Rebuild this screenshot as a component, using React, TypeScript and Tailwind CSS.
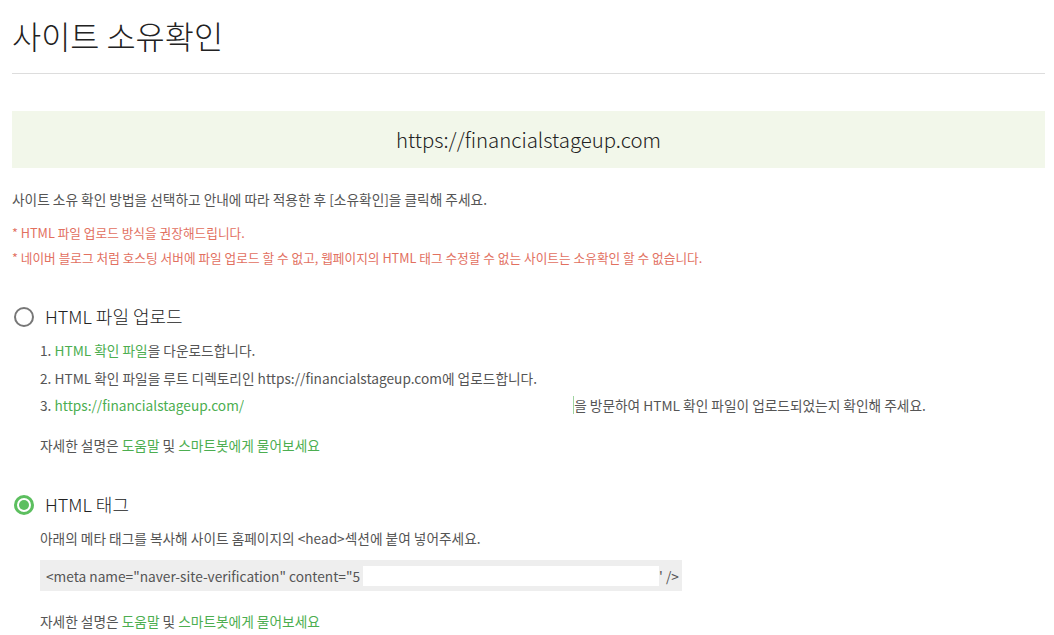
import React from 'react';

const font = { fontFamily: '"Noto Sans CJK KR", "Noto Sans", sans-serif' };

function Radio({ checked }: { checked?: boolean }) {
  if (checked) {
    return (
      <span className="flex h-[20px] w-[20px] items-center justify-center rounded-full border-[3px] border-[#5cbf5f]">
        <span className="h-[10px] w-[10px] rounded-full bg-[#5cbf5f]" />
      </span>
    );
  }
  return <span className="block h-[20px] w-[20px] rounded-full border-2 border-[#777]" />;
}

function Help() {
  return (
    <p className="mt-[20px] text-[13.7px] leading-[20px] text-[#555]">
      자세한 설명은 <span className="text-[#4cae50]">도움말</span> 및{' '}
      <span className="text-[#4cae50]">스마트봇에게 물어보세요</span>
    </p>
  );
}

export default function App() {
  return (
    <div className="min-h-[635px] bg-white px-[12px] pr-[9px]" style={font}>
      <h1 className="pt-[13px] pb-[16px] text-[31.7px] font-light leading-[44px] text-[#222]">
        사이트 소유확인
      </h1>
      <div className="h-px bg-[#ddd]" />

      <div className="mt-[37px] flex h-[57px] items-center justify-center bg-[#f2f7ea]">
        <span className="text-[20.4px] font-light text-[#222]">https://financialstageup.com</span>
      </div>

      <p className="mt-[21px] text-[13.7px] leading-[20px] text-[#555]">
        사이트 소유 확인 방법을 선택하고 안내에 따라 적용한 후 [소유확인]을 클릭해 주세요.
      </p>
      <div className="mt-[15px] flex flex-col gap-[7px] text-[12.7px] leading-[18px] text-[#e2705f]">
        <p>* HTML 파일 업로드 방식을 권장해드립니다.</p>
        <p>* 네이버 블로그 처럼 호스팅 서버에 파일 업로드 할 수 없고, 웹페이지의 HTML 태그 수정할 수 없는 사이트는 소유확인 할 수 없습니다.</p>
      </div>

      <section className="mt-[36px]">
        <label className="flex items-center gap-[11px] pl-[2px]">
          <Radio />
          <span className="text-[18px] font-light text-[#222]">HTML 파일 업로드</span>
        </label>
        <div className="mt-[10px] pl-[28px] text-[13.7px] leading-[20px] text-[#555]">
          <ol className="flex flex-col gap-[7.5px]">
            <li>
              1. <span className="text-[#4cae50]">HTML 확인 파일</span>을 다운로드합니다.
            </li>
            <li>2. HTML 확인 파일을 루트 디렉토리인 https://financialstageup.com에 업로드합니다.</li>
            <li className="flex items-center">
              <span>
                3. <span className="text-[#4cae50]">https://financialstageup.com/</span>
              </span>
              <span className="inline-block h-[18px] flex-1 max-w-[330px] border-r border-[#9fd4a0] bg-white" />
              <span>을 방문하여 HTML 확인 파일이 업로드되었는지 확인해 주세요.</span>
            </li>
          </ol>
          <Help />
        </div>
      </section>

      <section className="mt-[36px]">
        <label className="flex items-center gap-[11px] pl-[2px]">
          <Radio checked />
          <span className="text-[18px] font-light text-[#222]">HTML 태그</span>
        </label>
        <div className="mt-[10px] pl-[28px] text-[13.7px] leading-[20px] text-[#555]">
          <p>아래의 메타 태그를 복사해 사이트 홈페이지의 &lt;head&gt;섹션에 붙여 넣어주세요.</p>
          <div className="mt-[12px] flex h-[31px] w-[642px] items-center bg-[#eee] pl-[6px]">
            <span>&lt;meta name="naver-site-verification" content="5</span>
            <span className="ml-[3px] inline-block h-[20px] w-[296px] bg-white" />
            <span>' /&gt;</span>
          </div>
          <Help />
        </div>
      </section>
    </div>
  );
}
